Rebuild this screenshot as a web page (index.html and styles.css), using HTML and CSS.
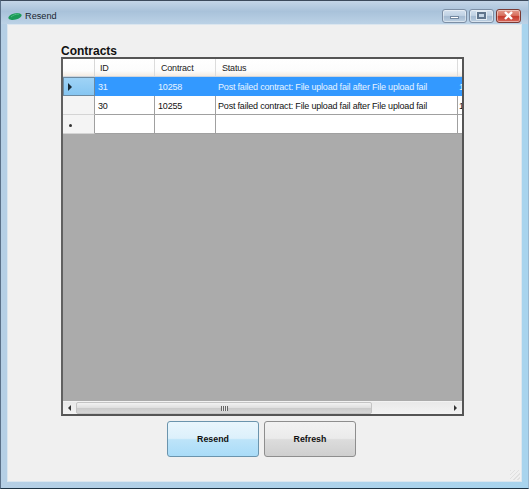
FILE: index.html
```html
<!DOCTYPE html>
<html lang="en">
<head>
<meta charset="utf-8">
<title>Resend</title>
<link rel="stylesheet" href="styles.css">
</head>
<body>
<div class="window">
  <div class="titlebar">
    <svg class="appicon" width="14" height="9" viewBox="0 0 14 9"><ellipse cx="7" cy="4.500" rx="6.800" ry="3.200" transform="rotate(-14 7 4.500)" fill="#1c9a58"/><path d="M3 5C5 3 8 2 11 2" stroke="#4fbd80" fill="none"/></svg>
    <span class="title">Resend</span>
    <div class="controls">
      <div class="ctl ctl-min"><span class="glyph-min"></span></div>
      <div class="ctl ctl-max"><span class="glyph-max"></span></div>
      <div class="ctl ctl-close"><svg width="11" height="9" viewBox="0 0 11 9"><path d="M2 1l7 7M9 1l-7 7" stroke="#fff" stroke-width="2.400"/></svg></div>
    </div>
  </div>
  <div class="client">
    <div class="label">Contracts</div>
    <div class="grid">
      <div class="rows">
        <div class="row head">
          <div class="rh"></div><div class="c id">ID</div><div class="c con">Contract</div><div class="c st">Status</div><div class="c ex"></div>
        </div>
        <div class="row sel">
          <div class="rh rh-sel"><span class="arrow"></span></div><div class="c id">31</div><div class="c con">10258</div><div class="c st">Post failed contract: File upload fail after File upload fail</div><div class="c ex">1</div>
        </div>
        <div class="row">
          <div class="rh"></div><div class="c id">30</div><div class="c con">10255</div><div class="c st">Post failed contract: File upload fail after File upload fail</div><div class="c ex">1</div>
        </div>
        <div class="row new">
          <div class="rh"><span class="star"></span></div><div class="c id"></div><div class="c con"></div><div class="c st"></div><div class="c ex"></div>
        </div>
      </div>
      <div class="empty"></div>
      <div class="hscroll">
        <div class="sbtn"><span class="tri-l"></span></div>
        <div class="track">
          <div class="thumb"><span class="grip"></span></div>
        </div>
        <div class="sbtn"><span class="tri-r"></span></div>
      </div>
    </div>
    <div class="buttons">
      <div class="btn btn-on">Resend</div>
      <div class="btn btn-off">Refresh</div>
    </div>
    <div class="grip-corner"></div>
  </div>
</div>
</body>
</html>
```

FILE: styles.css
```css
* { box-sizing: border-box; }
html, body { margin: 0; padding: 0; }
body { width: 529px; height: 489px; overflow: hidden; background: #fff; font-family: "Liberation Sans", Arial, sans-serif; }
.window {
  width: 529px; height: 489px;
  display: flex; flex-direction: column;
  border-top: 1px solid #3c4a5c;
  border-left: 1px solid #5a7088;
  border-right: 1px solid #9ab8d0;
  border-bottom: 1px solid #1d3344;
  background: linear-gradient(90deg, #b5cfe5 0, #a8d4ee 100%);
  padding: 0 6px 6px 6px;
}
.titlebar {
  height: 23px; flex: none;
  margin: 0 -6px; padding: 0 7px 0 7px;
  display: flex; align-items: center;
  background: linear-gradient(180deg, #c4d5e7 0, #a9c2da 45%, #bcd2e6 100%);
  color: #1a2530; font-size: 9px;
  position: relative;
}
.appicon { margin: 7px 3px 0 0; }
.title { margin-top: 7px; font-size: 9.200px; }
.controls { margin-left: auto; margin-top: 6px; display: flex; gap: 2px; }
.ctl {
  width: 25px; height: 14px;
  border: 1px solid #7d8fa5; border-radius: 3px;
  display: flex; align-items: center; justify-content: center;
  background: linear-gradient(180deg, #d3e0ee 0, #c0d2e4 45%, #a5bbd2 55%, #bdd0e2 100%);
  box-shadow: inset 0 0 0 1px rgba(255,255,255,.45);
}
.ctl-close {
  border-color: #7a3a34;
  background: linear-gradient(180deg, #e39a8c 0, #d9705f 45%, #c43a2c 55%, #d9675a 100%);
}
.glyph-min { display: block; width: 9px; height: 3px; margin-top: 4px; background: #fff; border: 1px solid #7388a0; }
.glyph-max { display: block; width: 9px; height: 7px; background: #c6d6e6; border: 2px solid #5f748c; outline: 1px solid #e2eaf2; }
.client {
  flex: 1; min-height: 0;
  background: #f0f0f0;
  border: 1px solid #dbe6ef;
  padding: 17px 56px 0 53px;
  display: flex; flex-direction: column;
  position: relative;
}
.label { font-size: 12px; font-weight: bold; line-height: 18px; height: 15px; color: #111; }
.grid {
  width: 403px; height: 359px; flex: none;
  border: 2px solid #555;
  border-left-color: #606060;
  display: flex; flex-direction: column;
  background: #ababab;
}
.rows { flex: none; }
.row { display: flex; height: 19px; background: #fff; font-size: 9px; letter-spacing: -.19px; color: #111; }
.row.head { height: 18px; background: linear-gradient(180deg, #fff 0, #fcfcfc 70%, #f5ece2 100%); border-bottom: 1px solid #cfd6de; }
.rh { width: 32px; flex: none; background: #f4f4f4; border-right: 1px solid #9f9f9f; border-bottom: 1px solid #d4d4d4; display: flex; align-items: center; justify-content: center; }
.head .rh { background: transparent; border-right: 1px solid #d8d8d8; border-bottom: 0; }
.rh-sel { background: linear-gradient(180deg, #9fd3f6 0, #86c6f2 100%); border: 1px solid #6d8aa0; }
.arrow { width: 0; height: 0; border-left: 4px solid #1a2a36; border-top: 4px solid transparent; border-bottom: 4px solid transparent; margin-right: 18px; }
.star { width: 3px; height: 3px; border-radius: 50%; background: #333; margin: 3px 16px 0 0; }
.c { border-right: 1px solid #a0a0a0; border-bottom: 1px solid #a0a0a0; padding-left: 3px; line-height: 20px; white-space: nowrap; overflow: hidden; flex: none; }
.id { width: 60px; }
.con { width: 61px; }
.st { width: 242px; padding-left: 2px; }
.ex { flex: 1; width: 4px; border-right: 0; padding-left: 1px; letter-spacing: -2px; }
.head .c { padding-left: 6px; border-right-color: #dcdcdc; border-bottom: 0; color: #222; line-height: 19px; }
.head .id { padding-left: 5px; }
.sel .c { background: #3399ff; color: #e8f4ff; border-right-color: #3399ff; border-bottom-color: #3399ff; }
.empty { flex: 1; min-height: 0; }
.hscroll { height: 13px; flex: none; display: flex; background: linear-gradient(180deg, #e9e9e9 0, #f3f3f3 100%); border-top: 1px solid #f2f2f2; }
.sbtn { width: 13px; flex: none; display: flex; align-items: center; justify-content: center; }
.tri-l { width: 0; height: 0; border-right: 3px solid #333; border-top: 3px solid transparent; border-bottom: 3px solid transparent; }
.tri-r { width: 0; height: 0; border-left: 3px solid #333; border-top: 3px solid transparent; border-bottom: 3px solid transparent; }
.track { flex: 1; display: flex; }
.thumb { width: 296px; background: linear-gradient(180deg, #f2f2f2 0, #e0e0e0 45%, #cbcbcb 55%, #d6d6d6 100%); border: 1px solid #c4c4c4; border-radius: 2px; display: flex; align-items: center; justify-content: center; }
.grip { width: 7px; height: 5px; background: repeating-linear-gradient(90deg, #666 0, #666 1px, #e8e8e8 1px, #e8e8e8 2px); }
.buttons { display: flex; gap: 5px; margin: 5px 0 0 106px; }
.btn { width: 92px; height: 36px; border-radius: 3px; display: flex; align-items: center; justify-content: center; font-size: 8.800px; font-weight: bold; color: #111; }
.btn-on { border: 1px solid #6b94ad; background: linear-gradient(180deg, #e9f6fd 0, #dcf0fb 48%, #bde4f9 52%, #a9dcf8 100%); }
.btn-off { border: 1px solid #8e8e8e; background: linear-gradient(180deg, #f2f2f2 0, #ebebeb 48%, #dcdcdc 52%, #cfcfcf 100%); }
.grip-corner { position: absolute; right: 1px; bottom: 1px; width: 10px; height: 10px; background: repeating-linear-gradient(135deg, #e0e0e0 0, #e0e0e0 1px, #f0f0f0 1px, #f0f0f0 3px); }
```
